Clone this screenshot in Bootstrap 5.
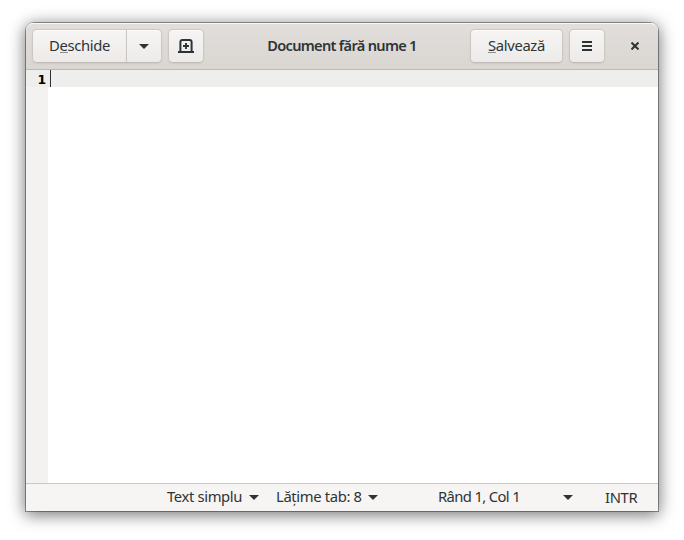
<!DOCTYPE html>
<html lang="ro">
<head>
<meta charset="utf-8">
<meta name="viewport" content="width=device-width, initial-scale=1">
<title>Document fără nume 1</title>
<link href="https://cdn.jsdelivr.net/npm/bootstrap@5.3.0/dist/css/bootstrap.min.css" rel="stylesheet">
<style>
body{width:684px;height:540px;padding:23px 26px 29px;overflow:hidden;background:#fff;color:#2e3436;font:14.8px/20px "Noto Sans",sans-serif;letter-spacing:-.36px}
.editor{height:488px;border-radius:8px 8px 0 0;background:#fff;box-shadow:0 0 0 1px rgba(0,0,0,.36),0 3px 16px 1px rgba(0,0,0,.5),0 0 20px rgba(0,0,0,.08)}
.titlebar{height:47px;padding:0 6px;border-bottom:1px solid #bfb8b1;border-radius:7px 7px 0 0;background:linear-gradient(#e1dedb,#dad6d2);box-shadow:inset 0 1px #f9f8f8}
.btn.tool{height:34px;padding:0;border:1px solid #cdc7c2;border-bottom-color:#c3bcb6;border-radius:5px;background:linear-gradient(#f6f5f4,#edebe9);color:#2e3436;font-size:inherit;line-height:20px;letter-spacing:inherit;box-shadow:inset 0 1px rgba(255,255,255,.8),0 1px 2px rgba(0,0,0,.07)}
.btn.tool.w-open,.btn.tool.w-save{padding-bottom:2px}
.btn-group>.btn.w-open{width:94px;flex:none;border-right:0;border-radius:5px 0 0 5px}
.btn-group>.btn.w-drop{width:36px;flex:none;margin-left:0;border-radius:0 5px 5px 0}
.w-icon{width:36px}
.w-save{width:93px}
.key{border-bottom:1px solid #8b8f90;display:inline-block;line-height:14px}
.doc-title{font-weight:650;font-size:14.6px;letter-spacing:-.7px;white-space:nowrap;padding-bottom:2px}
.gap-tools{gap:6px}
.gap-end{gap:6px;margin-right:1px}
.gutter{width:22px;background:#f3f2f1}
.line-now{height:17px;background:#eeeeec}
.line-num{font:bold 12.4px/20px "DejaVu Sans",sans-serif;letter-spacing:0;color:#000;padding-right:2px}
.caret-bar{width:1px;height:17px;margin-left:2px;background:#2e3436}
.statusbar{height:28px;border-top:1px solid #c9c9c4;background:#f6f5f4}
.stat{height:20px;margin-bottom:1px}
.stat span{padding-bottom:2px}
.stat-end{padding-bottom:2px}
.s-lang{margin-left:141px;width:109px;padding-right:17px}
.s-tab{width:162px;padding-right:60px}
.s-pos{width:167px;padding-right:32px}
.s-pos span{letter-spacing:-.64px}
svg{display:block}
.btn-group>.btn.w-open{width:95px}
.btn-group>.btn.w-open{padding-right:1px}
</style>
<script src="https://cdn.jsdelivr.net/npm/bootstrap@5.3.0/dist/js/bootstrap.bundle.min.js"></script>
</head>
<body>
<main class="editor d-flex flex-column">
  <header class="titlebar d-flex align-items-center justify-content-between flex-shrink-0">
    <div class="d-flex gap-tools">
      <div class="btn-group">
        <button class="btn tool w-open" type="button">D<span class="key">e</span>schide</button>
        <button class="btn tool w-drop d-flex align-items-center justify-content-center" type="button" aria-label="Recente"><svg width="10" height="5"><path d="M0 0H10L5 5Z" fill="#2e3436"/></svg></button>
      </div>
      <button class="btn tool w-icon d-flex align-items-center justify-content-center" type="button" aria-label="Document nou"><svg width="16" height="16" fill="none" stroke="#2e3436" stroke-width="2"><path d="M2.4 14V4Q2.4 2 4.4 2H11.6Q13.6 2 13.6 4V14M0 14H16"/><path stroke-width="1.9" d="M8 5V11M5 8H11"/></svg></button>
    </div>
    <div class="doc-title position-absolute start-50 translate-middle-x">Document fără nume 1</div>
    <div class="d-flex gap-end">
      <button class="btn tool w-save" type="button"><span class="key">S</span>alvează</button>
      <button class="btn tool w-icon d-flex align-items-center justify-content-center" type="button" aria-label="Meniu"><svg width="10" height="10" fill="#2e3436"><path d="M0 0H10V2H0ZM0 4H10V6H0ZM0 8H10V10H0Z"/></svg></button>
      <button class="btn border-0 p-0 ms-1 w-icon d-flex align-items-center justify-content-center ps-1" type="button" aria-label="Închide"><svg width="8" height="8" stroke="#2e3436" stroke-width="2"><path d="M.5.5L7.5 7.5M7.5.5L.5 7.5"/></svg></button>
    </div>
  </header>
  <section class="d-flex flex-grow-1">
    <div class="gutter"><div class="line-now line-num text-end">1</div></div>
    <div class="flex-grow-1"><div class="line-now"><div class="d-flex"><span class="caret-bar"></span></div></div></div>
  </section>
  <footer class="statusbar d-flex align-items-center flex-shrink-0">
    <div class="stat s-lang d-flex align-items-center justify-content-between"><span>Text simplu</span><svg width="10" height="5"><path d="M0 0H10L5 5Z" fill="#2e3436"/></svg></div>
    <div class="stat s-tab d-flex align-items-center justify-content-between"><span>Lățime tab: 8</span><svg width="10" height="5"><path d="M0 0H10L5 5Z" fill="#2e3436"/></svg></div>
    <div class="stat s-pos d-flex align-items-center justify-content-between"><span>Rând 1, Col 1</span><svg width="10" height="5"><path d="M0 0H10L5 5Z" fill="#2e3436"/></svg></div>
    <span class="stat-end">INTR</span>
  </footer>
</main>
</body>
</html>
